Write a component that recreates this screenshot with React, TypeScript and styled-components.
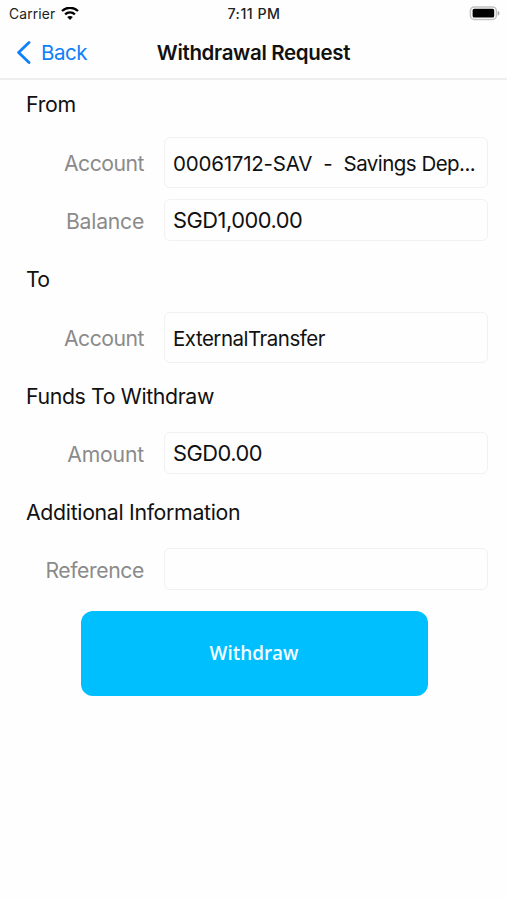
import React from "react";
import styled, { createGlobalStyle } from "styled-components";

const GlobalStyle = createGlobalStyle`
  * { box-sizing: border-box; }
  body { margin: 0; background: #fff; }
`;

const Screen = styled.main`
  width: 507px;
  height: 900px;
  overflow: hidden;
  background: #fefefe;
  color: #111;
  font-family: Inter, "Liberation Sans", sans-serif;
`;

const StatusBar = styled.div`
  display: grid;
  grid-template-columns: 1fr auto 1fr;
  align-items: center;
  height: 27px;
  padding: 0 7px 0 9px;
  font-size: 13.8px;
  color: #222;
`;

const Carrier = styled.div`
  display: flex;
  align-items: center;
  gap: 6px;
  letter-spacing: 0.15px;
`;

const Clock = styled.div`
  margin-right: 1px;
  font-size: 14.2px;
  font-weight: 500;
  letter-spacing: 0.5px;
`;

const BatteryIcon = styled.svg`
  justify-self: end;
`;

const NavBar = styled.header`
  display: grid;
  grid-template-columns: 1fr auto 1fr;
  align-items: center;
  height: 53px;
  padding: 0 16px;
  border-bottom: 2px solid #eeeeee;
`;

const BackButton = styled.button`
  display: flex;
  align-items: center;
  gap: 10px;
  padding: 0;
  border: 0;
  background: none;
  color: #0f7ffb;
  font: 400 20.5px Inter, sans-serif;
  letter-spacing: -0.45px;
`;

const Title = styled.h1`
  margin: 0;
  font-size: 20.5px;
  font-weight: 600;
  letter-spacing: -0.33px;
`;

const Form = styled.form`
  display: flex;
  flex-direction: column;
  padding: 9px 19px 0 26px;
`;

const SectionTitle = styled.h2<{ $spacing: number }>`
  margin: 0;
  height: 30px;
  line-height: 30px;
  font-size: 21.3px;
  font-weight: 400;
  letter-spacing: ${(p) => p.$spacing}px;
`;

const Fields = styled.div<{ $before: number; $after: number }>`
  display: flex;
  flex-direction: column;
  gap: 11px;
  padding-top: ${(p) => p.$before}px;
  padding-bottom: ${(p) => p.$after}px;
`;

const Field = styled.div`
  display: grid;
  grid-template-columns: 118px 324px;
  column-gap: 20px;
  align-items: center;
`;

const Label = styled.label<{ $spacing: number; $low?: boolean }>`
  padding-top: ${(p) => (p.$low ? 2 : 0)}px;
  text-align: right;
  font-size: 21.2px;
  line-height: 26px;
  color: #8b8b8b;
  letter-spacing: ${(p) => p.$spacing}px;
`;

const ValueBox = styled.div<{ $tall?: boolean; $spacing?: number }>`
  height: ${(p) => (p.$tall ? 51 : 42)}px;
  line-height: ${(p) => (p.$tall ? 49 : 40)}px;
  padding: ${(p) => (p.$tall ? 1 : 0)}px 8px 0;
  border: 1px solid #f1f1f1;
  border-radius: 6px;
  font-size: ${(p) => (p.$tall ? 20.5 : 21.8)}px;
  letter-spacing: ${(p) => p.$spacing ?? -0.48}px;
  white-space: pre;
`;

const AccountName = styled.span`
  letter-spacing: -0.53px;
`;

const SubmitButton = styled.button`
  align-self: center;
  width: 347px;
  height: 85px;
  margin: 0 0 0 -6px;
  padding: 0 0 2px;
  border: 0;
  border-radius: 12px;
  background: #00bfff;
  color: #f4fcff;
  font: 600 18.9px "Open Sans", "Noto Sans", sans-serif;
`;

const App: React.FC = () => (
  <Screen>
    <GlobalStyle />
    <StatusBar>
      <Carrier>
        Carrier
        <svg width="18" height="14" viewBox="0 0 18 14" fill="none" stroke="#000" strokeWidth="2.3">
          <path d="M1 4C5.4-.3 12.6-.3 17 4" />
          <path d="M4.1 7.4c2.7-2.6 7.1-2.6 9.8 0" />
          <path d="M9 12.9 6.2 10.1c1.6-1.5 4-1.5 5.6 0z" fill="#000" stroke="none" />
        </svg>
      </Carrier>
      <Clock>7:11 PM</Clock>
      <BatteryIcon width="31" height="15" viewBox="0 0 31 15">
        <rect x="1.4" y="0.9" width="26" height="12.6" rx="4" fill="#fff" stroke="#c2c2c2" strokeWidth="1.5" />
        <rect x="3.6" y="2.8" width="21.6" height="8.8" rx="1.6" fill="#000" />
        <path d="M28.7 4.9c2.4.5 2.4 4.1 0 4.6z" fill="#aaa" />
      </BatteryIcon>
    </StatusBar>
    <NavBar>
      <BackButton type="button">
        <svg width="15" height="24" viewBox="0 0 15 24" fill="none" stroke="currentColor" strokeWidth="2.8" strokeLinecap="round" strokeLinejoin="round">
          <path d="M13 1.5 2.6 11.5 13 21.5" />
        </svg>
        Back
      </BackButton>
      <Title>Withdrawal Request</Title>
    </NavBar>
    <Form>
      <SectionTitle $spacing={-0.3}>From</SectionTitle>
      <Fields $before={18} $after={23}>
        <Field>
          <Label $spacing={-0.5}>Account</Label>
          <ValueBox $tall $spacing={-0.22}>
            {"00061712-SAV  -  "}
            <AccountName>Savings Dep...</AccountName>
          </ValueBox>
        </Field>
        <Field>
          <Label $low $spacing={-0.25}>Balance</Label>
          <ValueBox>SGD1,000.00</ValueBox>
        </Field>
      </Fields>
      <SectionTitle $spacing={-0.8}>To</SectionTitle>
      <Fields $before={18} $after={18}>
        <Field>
          <Label $spacing={-0.5}>Account</Label>
          <ValueBox $tall $spacing={-0.5}>ExternalTransfer</ValueBox>
        </Field>
      </Fields>
      <SectionTitle $spacing={-0.37}>Funds To Withdraw</SectionTitle>
      <Fields $before={21} $after={23}>
        <Field>
          <Label $low $spacing={-0.2}>Amount</Label>
          <ValueBox>SGD0.00</ValueBox>
        </Field>
      </Fields>
      <SectionTitle $spacing={-0.32}>Additional Information</SectionTitle>
      <Fields $before={21} $after={21}>
        <Field>
          <Label $low $spacing={-0.4}>Reference</Label>
          <ValueBox />
        </Field>
      </Fields>
      <SubmitButton type="button">Withdraw</SubmitButton>
    </Form>
  </Screen>
);

export default App;
